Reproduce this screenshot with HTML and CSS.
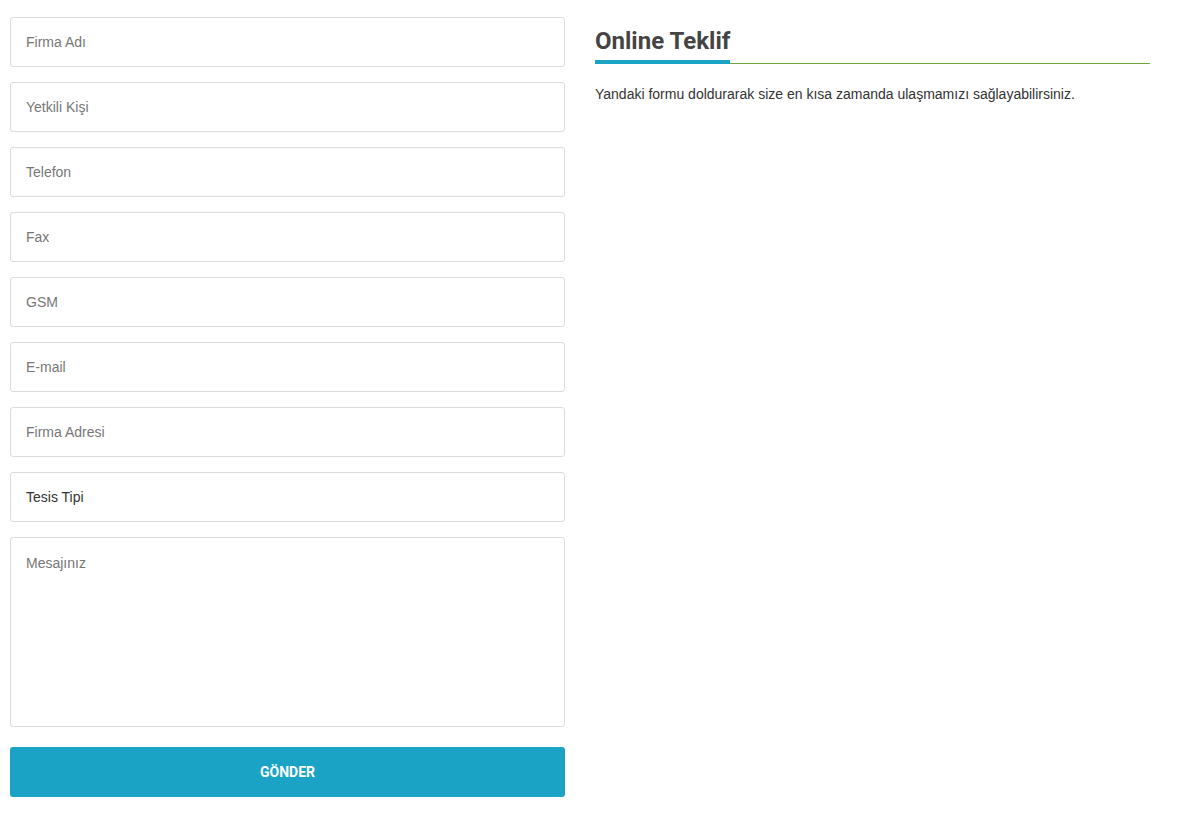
FILE: index.html
```html
<!DOCTYPE html>
<html lang="tr">
<head>
    <meta charset="UTF-8">
    <meta name="viewport" content="width=device-width, initial-scale=1.0">
    <title>Online Teklif</title>
    <link rel="stylesheet" href="styles.css">
</head>
<body>
    <div class="container">
        <!-- Form -->
        <form class="offer-form" onsubmit="return false;">
            <input type="text" placeholder="Firma Adı">
            <input type="text" placeholder="Yetkili Kişi">
            <input type="text" placeholder="Telefon">
            <input type="text" placeholder="Fax">
            <input type="text" placeholder="GSM">
            <input type="text" placeholder="E-mail">
            <input type="text" placeholder="Firma Adresi">
            <select>
                <option>Tesis Tipi</option>
            </select>
            <textarea placeholder="Mesajınız"></textarea>
            <button type="submit">GÖNDER</button>
        </form>

        <!-- Info -->
        <div class="info">
            <div class="title-wrap">
                <h2>Online Teklif</h2>
            </div>
            <p>Yandaki formu doldurarak size en kısa zamanda ulaşmamızı sağlayabilirsiniz.</p>
        </div>
    </div>
</body>
</html>
```

FILE: styles.css
```css
body {
    margin: 0;
    font-family: Arial, "Liberation Sans", sans-serif;
    font-size: 14px;
    color: #333;
    background: #fff;
}

.container {
    display: grid;
    grid-template-columns: 555px 555px;
    column-gap: 30px;
    padding: 17px 0 0 10px;
}

.offer-form {
    display: flex;
    flex-direction: column;
}

input, select, textarea {
    width: 100%;
    height: 50px;
    padding: 0 15px;
    margin-bottom: 15px;
    border: 1px solid #dcdcdc;
    border-radius: 3px;
    font-family: Arial, "Liberation Sans", sans-serif;
    font-size: 14px;
    color: #333;
    background: #fff;
    box-sizing: border-box;
    outline: none;
}

input::placeholder, textarea::placeholder {
    color: #777;
}

select {
    appearance: none;
    -webkit-appearance: none;
}

textarea {
    height: 190px;
    padding: 17px 15px;
    resize: none;
    margin-bottom: 20px;
}

button {
    height: 50px;
    border: none;
    border-radius: 3px;
    background-color: #1ba3c6;
    color: #fff;
    font-family: Roboto, sans-serif;
    font-weight: bold;
    font-size: 14px;
    cursor: pointer;
}

.title-wrap {
    border-bottom: 1px solid #6fa83a;
    margin-top: 8px;
}

.title-wrap h2 {
    display: inline-block;
    margin: 0 0 -1px 0;
    padding-bottom: 3px;
    border-bottom: 4px solid #1ba3c6;
    font-family: Roboto, sans-serif;
    font-size: 24px;
    font-weight: bold;
    line-height: 32px;
    color: #444;
}

.info p {
    margin: 20px 0 0 0;
    line-height: 20px;
}
```
